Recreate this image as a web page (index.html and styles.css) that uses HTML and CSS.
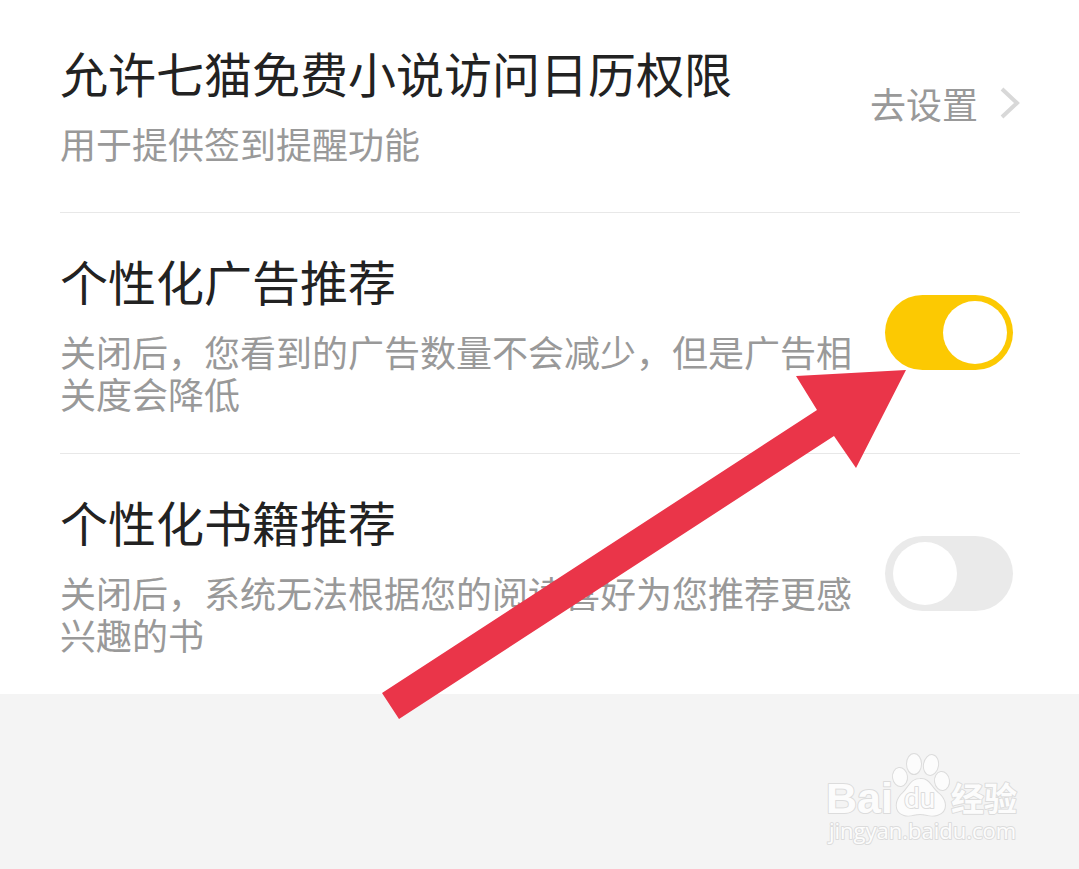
FILE: index.html
```
<!DOCTYPE html>
<html lang="zh-CN">
<head>
    <meta charset="UTF-8">
    <meta name="viewport" content="width=device-width, initial-scale=1.0">
    <title>隐私设置</title>
    <link rel="stylesheet" href="styles.css">
</head>
<body>
    <main class="settings">
        <section class="row permission-row">
            <div class="row-text">
                <h2>允许七猫免费小说访问日历权限</h2>
                <p>用于提供签到提醒功能</p>
            </div>
            <a class="go-setting" href="#">
                去设置
                <svg class="chevron" viewBox="0 0 20 32" aria-hidden="true">
                    <path d="M2 2 L17 16 L2 30" />
                </svg>
            </a>
        </section>

        <section class="row">
            <div class="row-text">
                <h2><label for="adSwitch">个性化广告推荐</label></h2>
                <p id="adDesc">关闭后，您看到的广告数量不会减少，但是广告相关度会降低</p>
            </div>
            <input class="switch" type="checkbox" id="adSwitch" aria-describedby="adDesc" checked>
        </section>

        <section class="row">
            <div class="row-text">
                <h2><label for="bookSwitch">个性化书籍推荐</label></h2>
                <p id="bookDesc">关闭后，系统无法根据您的阅读喜好为您推荐更感兴趣的书</p>
            </div>
            <input class="switch" type="checkbox" id="bookSwitch" aria-describedby="bookDesc">
        </section>

        <!-- Arrow pointing at the ad switch -->
        <svg class="arrow" viewBox="0 0 524 350" aria-hidden="true">
            <polygon points="524,1 414,7 435,41 0,324 17,350 452,67 474,99" />
        </svg>
    </main>

    <footer class="footer">
        <svg class="watermark" viewBox="0 0 200 96" role="img" aria-label="Baidu 经验">
            <text class="logo-text" x="3" y="63">Bai</text>
            <ellipse class="paw" cx="77" cy="27" rx="7" ry="9" transform="rotate(-8 77 27)" />
            <ellipse class="paw" cx="91" cy="14" rx="7" ry="10" />
            <ellipse class="paw" cx="108" cy="15" rx="7" ry="10" transform="rotate(10 108 15)" />
            <ellipse class="paw" cx="119" cy="31" rx="7" ry="9" transform="rotate(-8 119 31)" />
            <path class="paw" d="M97 29 C106 28 108 37 115 43 C124 50 125 62 114 65 C107 67 103 64 97 64 C91 64 87 67 81 65 C71 62 72 50 80 43 C86 37 88 29 97 29 Z" />
            <text class="du-text" x="81" y="58">du</text>
            <text class="jingyan-text" x="128" y="61">经验</text>
            <text class="url-text" x="6" y="89">jingyan.baidu.com</text>
        </svg>
    </footer>
</body>
</html>
```
FILE: styles.css
```
* {
    box-sizing: border-box;
}

body {
    margin: 0;
    font-family: "Noto Sans CJK SC", sans-serif;
    background-color: #f4f4f4;
    color: #222;
}

.settings {
    position: relative;
    padding: 0 59px 0 60px;
    background-color: #fff;
}

.row {
    display: flex;
    align-items: center;
    gap: 32px;
    padding: 37px 0 39px;
    border-bottom: 1px solid #e8e8e8;
}

.row:last-of-type {
    border-bottom: none;
}

.permission-row {
    padding: 42px 0 48px;
}

.row-text {
    flex: 1;
}

.row h2 {
    margin: 0 0 20px;
    font-size: 48px;
    font-weight: 400;
    line-height: 60px;
}

.row p {
    margin: 0;
    font-size: 36px;
    line-height: 42px;
    color: #999;
}

.go-setting {
    display: flex;
    align-items: center;
    gap: 22px;
    font-size: 36px;
    line-height: 42px;
    color: #999;
    text-decoration: none;
}

.chevron {
    width: 20px;
    height: 32px;
    fill: none;
    stroke: #d8d8d8;
    stroke-width: 4;
}

.switch {
    appearance: none;
    flex: none;
    width: 128px;
    height: 75px;
    margin: 0 7px 0 0;
    padding: 6px 6px 6px 8px;
    display: flex;
    border-radius: 38px;
    background-color: #eaeaea;
    cursor: pointer;
}

.switch::before {
    content: "";
    width: 64px;
    height: 63px;
    border-radius: 50%;
    background-color: #fff;
}

.switch:checked {
    justify-content: flex-end;
    background-color: #fcc902;
}

.arrow {
    position: absolute;
    top: 369px;
    left: 382px;
    width: 524px;
    height: 350px;
    fill: #ea3549;
    pointer-events: none;
}

.footer {
    display: flex;
    justify-content: flex-end;
    padding: 56px 56px 20px;
}

.watermark {
    width: 200px;
    height: 96px;
    overflow: visible;
    fill: #fcfcfc;
    stroke: #dcdcdc;
    stroke-width: 2;
    stroke-linejoin: round;
    paint-order: stroke;
}

.logo-text {
    font: 700 43px "Liberation Sans", sans-serif;
}

.du-text {
    font: 400 28px Roboto, sans-serif;
}

.jingyan-text {
    font: 700 33px "Noto Sans CJK SC", sans-serif;
}

.url-text {
    font: 400 22px "Open Sans", sans-serif;
}
```
